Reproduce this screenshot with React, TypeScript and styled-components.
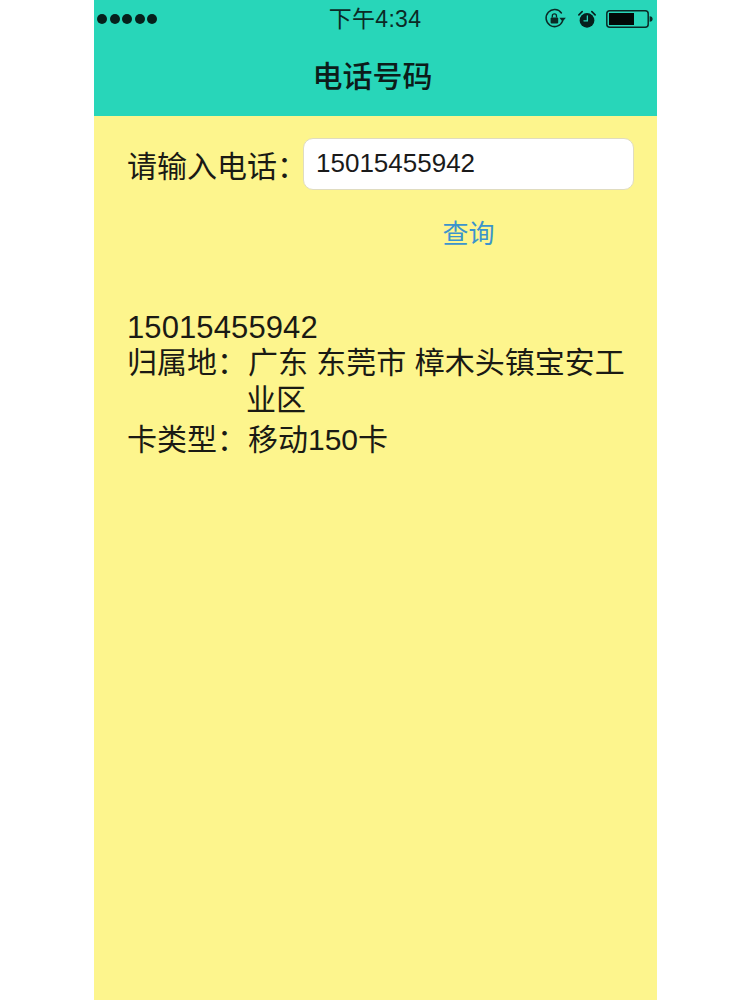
import React from "react";
import styled, { createGlobalStyle } from "styled-components";

const GlobalStyle = createGlobalStyle`
  html, body {
    margin: 0;
    padding: 0;
    background: #fff;
  }
  * {
    box-sizing: border-box;
  }
`;

const FONT = `"Liberation Sans", "Noto Sans CJK SC", sans-serif`;

const Phone = styled.div`
  width: 563px;
  height: 1000px;
  margin-left: 94px;
  display: flex;
  flex-direction: column;
  background: #fdf58d;
  color: #1a1a14;
  font-family: ${FONT};
  overflow: hidden;
`;

const Header = styled.header`
  height: 116px;
  background: #28d6b9;
  display: flex;
  flex-direction: column;
  flex-shrink: 0;
`;

const StatusBar = styled.div`
  height: 38px;
  padding: 0 4px 0 3px;
  display: grid;
  grid-template-columns: 1fr auto 1fr;
  align-items: center;
  color: #0b2a26;
`;

const Signal = styled.div`
  display: flex;
  gap: 2.5px;
`;

const Dot = styled.span`
  width: 10px;
  height: 10px;
  border-radius: 50%;
  background: #06201c;
`;

const Time = styled.div`
  font-size: 23px;
  line-height: 38px;
  letter-spacing: 0.3px;
`;

const StatusIcons = styled.div`
  display: flex;
  align-items: center;
  justify-content: flex-end;
  gap: 10px;
`;

const Title = styled.h1`
  margin: 0;
  flex: 1;
  padding: 0 6px 6px 0;
  display: flex;
  align-items: center;
  justify-content: center;
  font-size: 30px;
  font-weight: 500;
  color: #0c1c1a;
`;

const Content = styled.main`
  padding: 22px 23px 0 33px;
`;

const QueryForm = styled.div`
  display: grid;
  grid-template-columns: 176px 1fr;
  align-items: center;
`;

const FormLabel = styled.label`
  padding-top: 6px;
  font-size: 30px;
  line-height: 46px;
  white-space: nowrap;
`;

const PhoneInput = styled.input`
  width: 100%;
  height: 52px;
  padding: 0 12px 2px;
  border: 1px solid #e0dcc0;
  border-radius: 10px;
  background: #fff;
  color: #1a1a1a;
  font-family: ${FONT};
  font-size: 26px;
  outline: none;
`;

const QueryButton = styled.button`
  grid-column: 2;
  margin-top: 25px;
  justify-self: center;
  padding: 0;
  border: none;
  background: transparent;
  color: #3b94cc;
  font-family: ${FONT};
  font-size: 26px;
  line-height: 38px;
`;

const Result = styled.section`
  margin-top: 58px;
  font-size: 30px;
  line-height: 37px;
`;

const ResultNumber = styled.div`
  font-size: 31px;
  line-height: 33px;
  letter-spacing: 0.1px;
`;

const ResultRow = styled.div`
  display: grid;
  grid-template-columns: 119px 1fr;
  margin-top: ${(p: { $gap?: number }) => p.$gap ?? 0}px;
`;

const RowLabel = styled.span`
  white-space: nowrap;
`;

const RowValue = styled.span`
  text-indent: 2px;
`;

const RotationLockIcon = () => (
  <svg width="24" height="22" viewBox="0 0 24 22" fill="none">
    <path
      d="M18.5 13.2A8.5 8.5 0 1 1 17.4 5"
      stroke="#0b2a26"
      strokeWidth="1.5"
      strokeLinecap="round"
    />
    <path d="M15.4 9.8h6.4l-3.2 4z" fill="#0b2a26" />
    <rect x="6.6" y="9.6" width="7.6" height="6" rx="1" fill="#0b2a26" />
    <path
      d="M8.3 9.6V8a2.1 2.1 0 0 1 4.2 0v1.6"
      stroke="#0b2a26"
      strokeWidth="1.3"
    />
  </svg>
);

const AlarmIcon = () => (
  <svg width="18" height="19" viewBox="0 0 20 21" fill="none">
    <circle cx="10" cy="11.5" r="8.2" fill="#06201c" />
    <path
      d="M10.4 6.6v5.4H6.6"
      stroke="#28d6b9"
      strokeWidth="1.4"
      strokeLinecap="round"
    />
    <path
      d="M1 5.4 4.6 1.8M19 5.4l-3.6-3.6"
      stroke="#06201c"
      strokeWidth="1.8"
      strokeLinecap="round"
    />
  </svg>
);

const BatteryIcon = () => (
  <svg width="47" height="18" viewBox="0 0 47 18" fill="none">
    <rect
      x="0.8"
      y="0.8"
      width="41.4"
      height="16.4"
      rx="3"
      stroke="#0b2a26"
      strokeWidth="1.5"
    />
    <rect x="3" y="3" width="25" height="12" fill="#020a08" />
    <path d="M43.6 6.2c2 0 3 1.2 3 2.8s-1 2.8-3 2.8z" fill="#0b2a26" />
  </svg>
);

export default function App() {
  return (
    <Phone>
      <GlobalStyle />
      <Header>
        <StatusBar>
          <Signal>
            {[0, 1, 2, 3, 4].map((i) => (
              <Dot key={i} />
            ))}
          </Signal>
          <Time>下午4:34</Time>
          <StatusIcons>
            <RotationLockIcon />
            <AlarmIcon />
            <BatteryIcon />
          </StatusIcons>
        </StatusBar>
        <Title>电话号码</Title>
      </Header>
      <Content>
        <QueryForm>
          <FormLabel>请输入电话：</FormLabel>
          <PhoneInput defaultValue="15015455942" />
          <QueryButton>查询</QueryButton>
        </QueryForm>
        <Result>
          <ResultNumber>15015455942</ResultNumber>
          <ResultRow>
            <RowLabel>归属地：</RowLabel>
            <RowValue>广东 东莞市 樟木头镇宝安工业区</RowValue>
          </ResultRow>
          <ResultRow $gap={3}>
            <RowLabel>卡类型：</RowLabel>
            <RowValue>移动150卡</RowValue>
          </ResultRow>
        </Result>
      </Content>
    </Phone>
  );
}
